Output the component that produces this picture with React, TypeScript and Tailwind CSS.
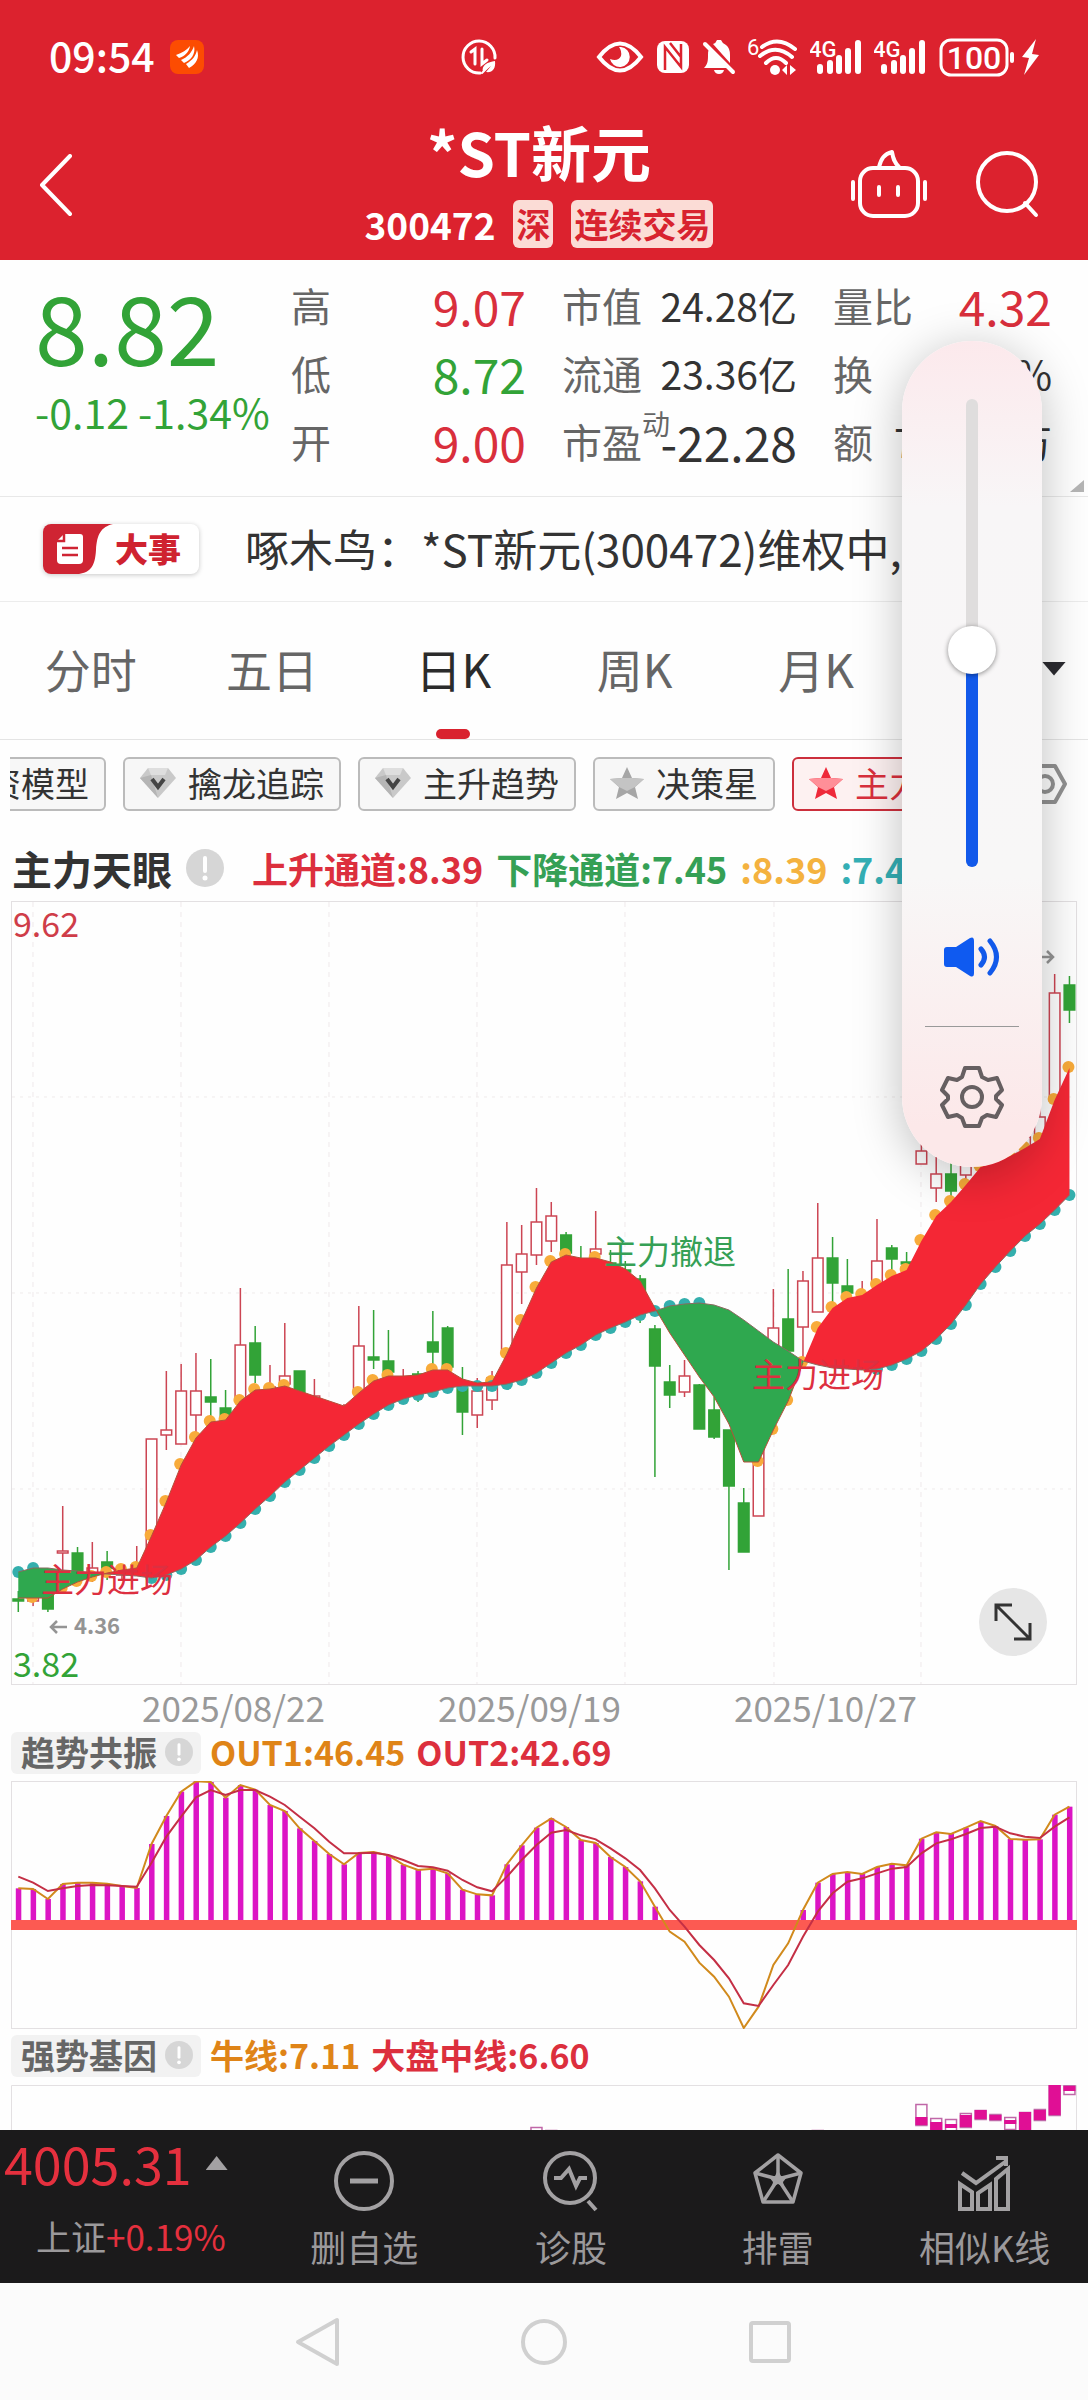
import React, { useState } from 'react';
import { X } from 'lucide-react';

type Candle = [kind: 'r' | 'g', index: number, high: number, top: number, bottom: number, low: number];

const STEP = 14.805;
const xAt = (i: number) => 7.3 + i * STEP;

const candles: Candle[] = [
  ['g', 0, 690, 698, 700, 711], ['r', 1, 690, 695, 700, 705], ['g', 2, 690, 693, 708, 711],
  ['r', 3, 605, 650, 652, 669], ['g', 4, 646, 652, 670, 671], ['r', 5, 641, 667, 672, 681],
  ['g', 6, 650, 661, 667, 679], ['r', 7, 669, 671, 674, 678], ['r', 8, 645, 664, 668, 675],
  ['r', 9, 538, 538, 666, 666], ['r', 10, 470, 529, 534, 549], ['r', 11, 463, 490, 543, 543],
  ['r', 12, 452, 490, 514, 531], ['g', 13, 458, 496, 501, 516], ['g', 14, 489, 507, 516, 516],
  ['r', 15, 387, 444, 497, 497], ['g', 16, 425, 442, 474, 482], ['r', 17, 464, 486, 490, 490],
  ['r', 18, 422, 475, 483, 483], ['g', 19, 470, 470, 492, 492], ['r', 20, 478, 495, 498, 498],
  ['r', 22, 503, 506, 508, 508], ['r', 23, 405, 445, 490, 490], ['g', 24, 409, 456, 459, 468],
  ['g', 25, 429, 460, 471, 471], ['r', 26, 468, 478, 480, 480], ['g', 27, 470, 473, 475, 501],
  ['g', 28, 410, 441, 451, 465], ['g', 29, 425, 427, 466, 466], ['g', 30, 466, 487, 511, 534],
  ['r', 31, 477, 490, 514, 527], ['r', 32, 470, 477, 499, 509], ['r', 33, 321, 364, 452, 452],
  ['r', 34, 324, 353, 371, 403], ['r', 35, 287, 321, 354, 364], ['r', 36, 301, 315, 340, 351],
  ['g', 37, 331, 334, 352, 352], ['g', 38, 345, 360, 362, 362], ['r', 39, 310, 348, 353, 353],
  ['g', 40, 349, 362, 364, 364], ['g', 41, 360, 369, 371, 371], ['g', 42, 374, 378, 397, 422],
  ['g', 43, 424, 428, 465, 576], ['g', 44, 464, 481, 494, 507], ['r', 45, 459, 475, 491, 496],
  ['g', 46, 483, 484, 528, 528], ['g', 47, 496, 509, 536, 538], ['g', 48, 529, 529, 585, 669],
  ['g', 49, 587, 602, 651, 651], ['r', 50, 540, 542, 615, 615], ['r', 51, 388, 427, 449, 449],
  ['g', 52, 368, 418, 450, 450], ['r', 53, 370, 380, 426, 459], ['r', 54, 302, 357, 411, 411],
  ['g', 55, 336, 357, 382, 404], ['g', 56, 358, 385, 392, 392], ['r', 57, 380, 394, 396, 396],
  ['r', 58, 318, 360, 382, 382], ['g', 59, 344, 347, 358, 375], ['g', 60, 351, 361, 363, 368],
  ['r', 61, 243, 250, 263, 263], ['r', 62, 256, 273, 287, 301], ['g', 63, 262, 273, 290, 302],
  ['r', 64, 240, 256, 274, 280], ['r', 68, 225, 236, 246, 246], ['r', 69, 205, 216, 238, 238],
  ['r', 70, 73, 92, 200, 200], ['g', 71, 75, 84, 109, 122],
];

const fast = [
  697, 697, 697, 688, 681, 676, 672, 669, 667, 635, 601, 564, 537, 521, 519, 500, 489, 488, 485, 490, 495, 500,
  505, 492, 480, 475, 475, 474, 469, 469, 478, 482, 481, 453, 420, 387, 361, 354, 357, 357, 361, 368, 380, 407,
  432, 454, 476, 496, 523, 561, 561, 529, 500, 462, 427, 407, 397, 394, 384, 375, 369, 340, 315, 301, 284, 266,
  261, 255, 247, 238, 199, 167,
];

const slow = [
  671, 667, 667, 669, 670, 672, 673, 674, 675, 677, 674, 668, 659, 646, 635, 622, 608, 595, 581, 569, 557, 545,
  534, 523, 513, 504, 498, 494, 491, 487, 485, 485, 485, 483, 479, 472, 462, 452, 444, 434, 427, 421, 414, 410,
  405, 403, 402, 404, 409, 419, 430, 441, 450, 460, 464, 467, 468, 469, 468, 464, 458, 450, 438, 423, 404, 383,
  366, 350, 335, 323, 309, 294,
];

const fastDots = [
  1, 3, 4, 5, 6, 7, 8, 9, 10, 11, 12, 13, 14, 15, 16, 17, 18, 23, 24, 25, 28, 29, 32, 33, 34, 35, 36, 37, 39, 50,
  51, 52, 53, 54, 55, 56, 57, 58, 59, 60, 61, 62, 63, 64, 65, 66, 67, 68, 69, 70, 71,
];
const slowDotHidden = [2, 3, 4, 5, 6, 7, 8, 47, 48, 49, 50, 51, 52, 53, 54, 55, 56, 57];

const out1 = [
  625, 627, 657, 612, 608, 608, 611, 618, 624, 492, 408, 335, 304, 306, 353, 315, 329, 375, 393, 445, 483, 522,
  553, 519, 516, 526, 554, 570, 566, 580, 629, 643, 646, 553, 496, 443, 415, 441, 480, 489, 531, 561, 604, 680,
  755, 785, 848, 890, 950, 1044, 980, 855, 790, 690, 608, 582, 576, 582, 561, 551, 556, 476, 457, 462, 443, 423,
  438, 477, 479, 478, 404, 380,
];
const out2 = [
  590, 608, 633, 625, 618, 615, 616, 618, 620, 548, 470, 410, 352, 330, 345, 330, 330, 350, 375, 410, 445, 485,
  520, 520, 518, 525, 540, 558, 562, 572, 600, 622, 634, 590, 540, 495, 458, 450, 466, 478, 505, 535, 570, 625,
  690, 740, 795, 840, 895, 970, 978, 915, 855, 770, 695, 640, 605, 595, 580, 566, 561, 520, 490, 478, 462, 444,
  440, 460, 470, 474, 440, 412,
];
const trendY = (v: number) => v / 3 - 101;

// split the channel wherever the two lines cross
function buildBands() {
  const bands: { up: boolean; points: string }[] = [];
  let top: number[][] = [[xAt(0), fast[0]]];
  let bottom: number[][] = [[xAt(0), slow[0]]];
  const close = (up: boolean) => {
    bands.push({ up, points: [...top, ...bottom.reverse()].map((p) => p.join(',')).join(' ') });
  };
  for (let i = 1; i < fast.length; i++) {
    const before = fast[i - 1] - slow[i - 1];
    const after = fast[i] - slow[i];
    if (before * after < 0) {
      const t = before / (before - after);
      const cross = [xAt(i - 1 + t), fast[i - 1] + (fast[i] - fast[i - 1]) * t];
      top.push(cross);
      bottom.push([...cross]);
      close(before < 0);
      top = [cross];
      bottom = [[...cross]];
    }
    top.push([xAt(i), fast[i]]);
    bottom.push([xAt(i), slow[i]]);
  }
  close(fast[fast.length - 1] < slow[slow.length - 1]);
  return bands;
}

const line = (values: number[], toY: (v: number) => number = (v) => v) =>
  values.map((v, i) => `${xAt(i)},${toY(v)}`).join(' ');

function Signal() {
  return (
    <svg width="52" height="38" viewBox="0 0 52 38" fill="#fff" aria-hidden="true">
      <text x="-1" y="19" fontSize="22" fontWeight="500" fontFamily="Roboto, sans-serif">4G</text>
      <rect x="7" y="26" width="6" height="10" rx="3" />
      <rect x="17" y="22" width="6" height="14" rx="3" />
      <rect x="26" y="17" width="6" height="19" rx="3" />
      <rect x="35" y="10" width="6" height="26" rx="3" />
      <rect x="45" y="2" width="6" height="34" rx="3" />
    </svg>
  );
}

function StatusBar() {
  return (
    <div className="flex h-[114px] items-center pr-[48px] pl-[49px] text-white">
      <span className="pb-1.5 text-[41px] leading-none font-medium">09:54</span>
      <svg className="ml-[15px] rounded-lg" width="34" height="34" viewBox="0 0 34 34" aria-hidden="true">
        <rect width="34" height="34" fill="#fc4c02" />
        <path d="M6 15C12 13 17 10 20 6C19 12 15 16 9 18Z" fill="#fff" />
        <path d="M11 20C18 17 22 12 24 6C26 14 21 20 14 23Z" fill="#fff" />
        <path d="M16 24C23 20 26 15 27 10C30 18 26 24 19 28Z" fill="#fff" />
      </svg>
      <svg className="ml-[257px]" width="37" height="38" viewBox="0 0 37 38" fill="none" stroke="#fff" strokeWidth="3" strokeLinecap="round" aria-hidden="true">
        <path d="M19 35A16 16 0 1 1 34 20" />
        <path d="M10 14L14 11V26M21 11V26L26 22" />
        <path d="M22 34C20 27 27 24 34 23C35 31 31 35 25 34L30 28" fill="#fff" stroke="none" />
        <path d="M21 35L28 28" strokeWidth="2" />
      </svg>
      <div className="ml-auto flex items-center gap-3">
        <svg width="48" height="34" viewBox="0 0 48 34" aria-hidden="true">
          <path d="M3 17Q24 -10 45 17Q24 44 3 17Z" fill="none" stroke="#fff" strokeWidth="4" />
          <path d="M25 7A10 10 0 1 1 14 19Q22 22 25 16Q26 11 23 7Z" fill="#fff" />
        </svg>
        <svg width="34" height="34" viewBox="0 0 34 34" aria-hidden="true">
          <rect x="1" y="1" width="32" height="32" rx="8" fill="#fff" />
          <path d="M9 30V7L25 27V4M9 7V27M14 3L25 17" fill="none" stroke="#dc222e" strokeWidth="2.5" />
        </svg>
        <svg width="34" height="36" viewBox="0 0 34 36" fill="#fff" aria-hidden="true">
          <path d="M7 10L27 29H2C6 25 6 21 6 16Q6 12 7 10Z" />
          <path d="M11 5Q14 4 15 1H19Q20 4 24 6Q28 9 28 16V24Z" />
          <path d="M12 31H22Q21 35 17 35T12 31Z" />
          <path d="M3 5L31 33" stroke="#fff" strokeWidth="4" strokeLinecap="round" />
        </svg>
        <svg width="50" height="38" viewBox="0 0 50 38" fill="none" stroke="#fff" aria-hidden="true">
          <text x="-1" y="17" fontSize="22" fontFamily="Roboto, sans-serif" fill="#fff" stroke="none">6</text>
          <path d="M14 9Q30 -3 47 11M12 18Q28 5 44 19M18 25Q28 15 38 25" strokeWidth="4" strokeLinecap="round" />
          <circle cx="27" cy="32" r="5" fill="#fff" stroke="none" />
          <path d="M34 32L39 27V37ZM48 32L42 27V37Z" fill="#fff" stroke="none" />
        </svg>
        <Signal />
        <Signal />
        <svg width="102" height="40" viewBox="0 0 102 40" aria-hidden="true">
          <rect x="3" y="3" width="66" height="35" rx="10" fill="none" stroke="#fff" strokeWidth="3" />
          <text x="36" y="32" textAnchor="middle" fontSize="32" fontWeight="500" fontFamily="Roboto, sans-serif" fill="#fff">100</text>
          <rect x="72" y="15" width="4" height="11" rx="2" fill="#fff" />
          <path d="M98 2L84 20L91 21L86 38L101 18L94 17Z" fill="#fff" />
        </svg>
      </div>
    </div>
  );
}

function Header() {
  return (
    <header className="bg-[#dc222e]">
      <StatusBar />
      <div className="grid h-[146px] grid-cols-[1fr_auto_1fr] items-center pr-[46px] pl-9">
        <button type="button" aria-label="返回" className="justify-self-start">
          <svg width="40" height="66" viewBox="0 0 40 66" fill="none" stroke="#fff" strokeWidth="4" strokeLinecap="round" strokeLinejoin="round">
            <path d="M34 2L6 31L34 60" />
          </svg>
        </button>
        <div className="flex flex-col items-center text-white">
          <h1 className="mb-6 text-[60px] leading-[50px] font-bold">*ST新元</h1>
          <p className="flex items-center gap-[18px] text-[34px] leading-[48px] font-bold">
            <span className="text-[37px]">300472</span>
            <span className="rounded-md bg-[#fbdcd6] px-[3px] text-[#d8232f]">深</span>
            <span className="rounded-md bg-[#fbdcd6] px-[3px] text-[#d8232f]">连续交易</span>
          </p>
        </div>
        <div className="flex items-center gap-[46px] justify-self-end pb-1.5">
          <button type="button" aria-label="智能助手">
            <svg width="78" height="70" viewBox="0 0 78 70" fill="none" stroke="#fff" strokeWidth="4" strokeLinecap="round" strokeLinejoin="round">
              <rect x="10" y="19" width="58" height="48" rx="13" />
              <path d="M29 18C31 10 34 5 42 3C43 9 44 13 49 18M3 33V50M75 33V50" />
              <path d="M29 38V46M48 38V46" />
            </svg>
          </button>
          <button type="button" aria-label="搜索">
            <svg width="68" height="70" viewBox="0 0 68 70" fill="none" stroke="#fff" strokeWidth="4" strokeLinecap="round">
              <circle cx="33" cy="33" r="29" />
              <path d="M51 54L62 66" />
            </svg>
          </button>
        </div>
      </div>
    </header>
  );
}

function Quote() {
  return (
    <section className="relative grid h-[237px] grid-cols-[220px_235px_235px_219px] content-start gap-x-[36px] border-b border-[#e8e8e8] pt-[11px] pl-[35px]">
      <div className="text-[#32a337]">
        <div className="text-[95px] leading-[108px]">8.82</div>
        <div className="mt-1.5 text-[41px] leading-[52px] whitespace-nowrap">-0.12 -1.34%</div>
      </div>
      <dl className="grid grid-cols-[auto_1fr] text-[40px] leading-[68px] text-[#666]">
        <dt>高</dt>
        <dd className="text-right text-[48px] text-[#d92f3c]">9.07</dd>
        <dt>低</dt>
        <dd className="text-right text-[48px] text-[#32a337]">8.72</dd>
        <dt>开</dt>
        <dd className="text-right text-[48px] text-[#d92f3c]">9.00</dd>
      </dl>
      <dl className="grid grid-cols-[auto_1fr] text-[40px] leading-[68px] whitespace-nowrap text-[#666]">
        <dt>市值</dt>
        <dd className="text-right text-[39px] text-[#333]">24.28亿</dd>
        <dt>流通</dt>
        <dd className="text-right text-[39px] text-[#333]">23.36亿</dd>
        <dt className="relative">
          市盈<span className="absolute top-0 left-full -mt-[18px] text-[28px]">动</span>
        </dt>
        <dd className="text-right text-[48px] text-[#333]">-22.28</dd>
      </dl>
      <dl className="grid grid-cols-[auto_1fr] text-[40px] leading-[68px] whitespace-nowrap text-[#666]">
        <dt>量比</dt>
        <dd className="text-right text-[48px] text-[#d92f3c]">4.32</dd>
        <dt>换</dt>
        <dd className="text-right text-[#333]">3.28%</dd>
        <dt>额</dt>
        <dd className="-ml-10 text-right text-[39px] text-[#333]">7358.4万</dd>
      </dl>
      <span className="absolute right-1 bottom-1 h-3 w-3.5 bg-[#b5b5b5] [clip-path:polygon(100%_0,100%_100%,0_100%)]" />
    </section>
  );
}

function News() {
  return (
    <section className="flex h-[105px] items-center border-b border-[#ececec] pr-[40px] pl-[43px] whitespace-nowrap">
      <span className="flex h-[50px] items-center overflow-hidden rounded-lg bg-white pr-[18px] text-[33px] font-black text-[#cf2230] shadow-[0_1px_5px_rgba(0,0,0,0.22)]">
        <svg width="72" height="50" viewBox="0 0 72 50" aria-hidden="true">
          <path d="M0 0H70C58 3 54 10 53 26C52 42 48 48 36 50H0Z" fill="#cf2433" />
          <path d="M21 10H37Q40 10 40 13V36Q40 40 36 40H18Q14 40 14 36V17Z" fill="#fff" />
          <path d="M21 10V17H14M19 24H35M19 31H35" fill="none" stroke="#cf2433" strokeWidth="2.5" />
        </svg>
        大事
      </span>
      <a href="#news" className="ml-[46px] pb-0.5 text-[44px] leading-none text-[#333]">啄木鸟：*ST新元(300472)维权中,</a>
      <button type="button" aria-label="关闭" className="ml-auto text-[#999]">
        <X size={42} strokeWidth={2} />
      </button>
    </section>
  );
}

function Tabs() {
  const tabs = ['分时', '五日', '日K', '周K', '月K'];
  const [active, setActive] = useState('日K');
  return (
    <nav className="grid h-[138px] grid-cols-6 border-b border-[#e4e4e4] text-[46px] text-[#666]">
      {tabs.map((tab) => (
        <button
          key={tab}
          type="button"
          onClick={() => setActive(tab)}
          className={`relative pb-1 ${active === tab ? 'text-[#2b2b2b]' : ''}`}
        >
          {tab}
          {active === tab && <span className="absolute bottom-0 left-1/2 h-2.5 w-[34px] -translate-x-1/2 rounded-md bg-[#d9222e]" />}
        </button>
      ))}
      <button type="button" className="flex items-center justify-end gap-2 pr-[22px] pb-1">
        分钟
        <span className="h-3.5 w-6 bg-[#2b2b30] [clip-path:polygon(0_0,100%_0,50%_100%)]" />
      </button>
    </nav>
  );
}

function Gem() {
  return (
    <svg width="36" height="32" viewBox="0 0 36 32" aria-hidden="true">
      <path d="M8 1H28L36 11L18 31L0 11Z" fill="#c9c9c9" />
      <path d="M8 1H28L25 8H11Z" fill="#dedede" />
      <path d="M0 11L11 8L18 31Z" fill="#b5b5b5" />
      <path d="M12 12L18 20L24 12" fill="none" stroke="#444" strokeWidth="4" />
    </svg>
  );
}

function Star({ outer, inner }: { outer: string; inner: string }) {
  return (
    <svg width="34" height="32" viewBox="0 0 34 32" aria-hidden="true">
      <path d="M17 0L22 11L34 12L25 20L28 32L17 26L6 32L9 20L0 12L12 11Z" fill={outer} />
      <path d="M34 12L25 20L17 24L9 20L0 12L12 11H22Z" fill={inner} />
    </svg>
  );
}

function Chips() {
  const base = 'flex h-[54px] shrink-0 items-center gap-3 rounded-md border-2 px-[15px] pb-0.5';
  return (
    <div className="flex items-center pt-[17px] pr-[21px] pl-2.5 text-[34px] leading-none whitespace-nowrap text-[#333]">
      <div className="flex flex-1 gap-[17px] overflow-hidden">
        <button type="button" className={`${base} -ml-[74px] border-[#bbb] bg-[#f7f7f7]`}>投资模型</button>
        <button type="button" className={`${base} border-[#bbb] bg-[#f7f7f7]`}><Gem />擒龙追踪</button>
        <button type="button" className={`${base} border-[#bbb] bg-[#f7f7f7]`}><Gem />主升趋势</button>
        <button type="button" className={`${base} border-[#bbb] bg-[#f7f7f7]`}><Star outer="#a6a6a6" inner="#c4c4c4" />决策星</button>
        <button type="button" className={`${base} border-[#cc2f3c] bg-[#fdf1f1] text-[#d92f3c]`}><Star outer="#ee2a3a" inner="#ff8f98" />主力天眼</button>
      </div>
      <button type="button" aria-label="指标设置" className="ml-3">
        <svg width="44" height="40" viewBox="0 0 44 40" fill="none" stroke="#919191" strokeWidth="4" strokeLinejoin="round">
          <path d="M12 2H32L42 20L32 38H12L2 20Z" />
          <circle cx="22" cy="20" r="8" />
        </svg>
      </button>
    </div>
  );
}

function Info({ size }: { size: number }) {
  return (
    <svg width={size} height={size} viewBox="0 0 38 38" aria-hidden="true">
      <circle cx="19" cy="19" r="19" fill="#d6d6d6" />
      <path d="M19 9V22" stroke="#fff" strokeWidth="4" strokeLinecap="round" />
      <circle cx="19" cy="29" r="2.5" fill="#fff" />
    </svg>
  );
}

function PriceChart() {
  const bands = buildBands();
  return (
    <div className="relative mx-[11px]">
      <svg className="block h-auto w-full" viewBox="0 0 1066 784" role="img" aria-label="日K线">
        <rect x="0.5" y="0.5" width="1065" height="783" fill="none" stroke="#e3e0e2" />
        {[22, 170, 318, 466, 614, 763, 910].map((x) => (
          <path key={x} d={`M${x} 1V783`} stroke="#efe9eb" strokeDasharray="5 5" />
        ))}
        {[196, 392, 588].map((y) => (
          <path key={y} d={`M1 ${y}H1065`} stroke="#efebeb" strokeDasharray="3 5" />
        ))}
        {candles.map(([kind, i, high, top, bottom, low]) => (
          <g key={i} stroke={kind === 'r' ? '#cc4553' : '#32a337'} strokeWidth="1.5">
            <path d={`M${xAt(i)} ${high}V${top}M${xAt(i)} ${bottom}V${low}`} />
            <rect x={xAt(i) - 5.3} y={top} width="10.6" height={bottom - top} fill={kind === 'r' ? '#fff' : '#32a337'} />
          </g>
        ))}
        {fastDots.map((i) => (
          <circle key={i} cx={xAt(i) - 1} cy={fast[i] - 1} r="6" fill="#f8ab3a" />
        ))}
        {slow.map((y, i) =>
          slowDotHidden.includes(i) ? null : <circle key={i} cx={xAt(i)} cy={y} r="6" fill="#34afad" />
        )}
        {bands.map((band) => (
          <polygon key={band.points} points={band.points} fill={band.up ? '#f42735' : '#2fa84f'} />
        ))}
        <polyline points={line(slow)} fill="none" stroke="#8a6a60" strokeWidth="1" />
        <polyline points={line(fast.slice(0, 54))} fill="none" stroke="#b5503a" strokeWidth="1" />
        <g fontSize="33">
          <text x="2" y="36" fill="#cf3d49" fontSize="34">9.62</text>
          <text x="30" y="691" fill="#dd2f40">主力进场</text>
          <text x="593" y="363" fill="#35a055">主力撤退</text>
          <text x="741" y="486" fill="#dd2f40">主力进场</text>
          <text x="2" y="776" fill="#32a337" fontSize="34">3.82</text>
          <text x="63" y="733" fill="#949494" fontSize="22" fontWeight="700">4.36</text>
        </g>
        <path d="M56 726H40M46 720L40 726L46 732M1018 56H1042M1036 50L1042 56L1036 62" fill="none" stroke="#949494" strokeWidth="2.5" />
      </svg>
      <button type="button" aria-label="全屏" className="absolute right-[30px] bottom-[29px] rounded-full bg-[#e6e6e6] p-[15px]">
        <svg width="38" height="38" viewBox="0 0 38 38" fill="none" stroke="#333" strokeWidth="3">
          <path d="M2 18V2H18M2 2L36 36M36 20V36H20" />
        </svg>
      </button>
    </div>
  );
}

function SubTitle({ name, children }: { name: string; children: React.ReactNode }) {
  return (
    <div className="flex items-center gap-[9px] pl-[11px] text-[34px] leading-[40px] font-bold">
      <button type="button" className="flex items-center gap-2 rounded-md bg-[#f2f2f2] pr-2 pb-0.5 pl-2.5 text-[#666]">
        {name}
        <Info size={28} />
      </button>
      <p className="flex gap-[11px] pb-0.5">{children}</p>
    </div>
  );
}

function TrendChart() {
  return (
    <svg className="mt-[7px] block h-auto w-full px-[11px]" viewBox="0 0 1066 248" role="img" aria-label="趋势共振">
      <rect x="0.5" y="0.5" width="1065" height="247" fill="none" stroke="#e3e0e2" />
      {out1.map((v, i) =>
        v < 721 ? <rect key={i} x={xAt(i) - 2.5} y={trendY(v)} width="5.5" height={140 - trendY(v)} fill="#dc14c4" /> : null
      )}
      <rect y="139" width="1066" height="10" fill="#fc5a52" />
      <polyline points={line(out1, trendY)} fill="none" stroke="#d18a1c" strokeWidth="2" />
      <polyline points={line(out2, trendY)} fill="none" stroke="#c42f45" strokeWidth="2" />
    </svg>
  );
}

// index, outline top, outline bottom, fill top, fill bottom
const geneBars = [
  [35, 42, 60, 60, 60], [36, 45, 60, 60, 60], [54, 45, 60, 60, 60],
  [61, 19, 40, 32, 40], [62, 33, 60, 37, 60], [63, 34, 60, 39, 43], [64, 28, 42, 30, 42],
  [65, 25, 34, 25, 34], [66, 29, 35, 30, 35], [67, 32, 44, 35, 39], [68, 27, 60, 27, 60],
  [69, 24, 35, 25, 35], [70, 0, 30, 0, 30], [71, 0, 9, 1, 6],
];

function GeneChart() {
  return (
    <svg className="mt-2 block h-auto w-full px-[11px]" viewBox="0 0 1066 45" role="img" aria-label="强势基因">
      <path d="M0.5 45V0.5H1065.5V45" fill="none" stroke="#e3e0e2" />
      {geneBars.map(([i, top, bottom, fillTop, fillBottom]) => (
        <g key={i}>
          <rect x={xAt(i) - 5.5} y={top + 0.5} width="11" height={bottom - top} fill="#fff" stroke="#c067a8" strokeWidth="1.5" />
          <rect x={xAt(i) - 6} y={fillTop} width="12" height={fillBottom - fillTop} fill="#e00f95" />
        </g>
      ))}
    </svg>
  );
}

function BottomBar() {
  const item = 'flex flex-1 flex-col items-center gap-2 pt-5 text-[36px] leading-[52px]';
  return (
    <footer className="flex h-[153px] bg-[#1b1a1b] whitespace-nowrap text-[#9b999b]">
      <div className="flex w-[261px] shrink-0 flex-col pt-1">
        <div className="flex items-center gap-3.5 pl-1 text-[52px] leading-[58px] text-[#e5303e]">
          4005.31
          <span className="h-3.5 w-[22px] bg-[#a3a1a3] [clip-path:polygon(50%_0,100%_100%,0_100%)]" />
        </div>
        <div className="pt-[18px] pl-9 text-[35px] leading-[52px]">
          上证<span className="text-[#e5303e]">+0.19%</span>
        </div>
      </div>
      <button type="button" className={item}>
        <svg width="62" height="62" viewBox="0 0 62 62" fill="none" stroke="#a3a1a3" strokeWidth="4">
          <circle cx="31" cy="31" r="28" />
          <path d="M17 31H45" strokeWidth="5" />
        </svg>
        删自选
      </button>
      <button type="button" className={item}>
        <svg width="62" height="62" viewBox="0 0 62 62" fill="none" stroke="#a3a1a3" strokeWidth="4">
          <circle cx="30" cy="28" r="25" />
          <path d="M14 28H21L29 19L36 36L40 28H47M48 51L56 60" />
        </svg>
        诊股
      </button>
      <button type="button" className={item}>
        <svg width="62" height="62" viewBox="0 0 62 62" fill="none" stroke="#a3a1a3" strokeWidth="3.5" strokeLinejoin="round">
          <path d="M31 5L54 23L46 52H16L8 23Z" />
          <path d="M31 5V29L54 23M31 29L46 52M31 29L16 52M31 29L8 23" />
          <path d="M31 20L34 26L40 27L36 32L37 37L31 34L25 37L26 32L22 27L28 26Z" fill="#a3a1a3" stroke="none" />
        </svg>
        排雷
      </button>
      <button type="button" className={item}>
        <svg width="62" height="62" viewBox="0 0 62 62" fill="none" stroke="#a3a1a3" strokeWidth="4">
          <path d="M6 59V34L18 42V59ZM24 59V43L36 35V59ZM42 59V29L54 19V59Z" />
          <path d="M8 23L22 33L51 12M42 8H52V16" />
        </svg>
        相似K线
      </button>
    </footer>
  );
}

function SystemNav() {
  return (
    <nav className="flex h-[117px] items-center justify-center gap-[177px] bg-[#fbfbfb]">
      <button type="button" aria-label="后退">
        <svg width="48" height="50" viewBox="0 0 48 50" fill="none" stroke="#d0d0d0" strokeWidth="4" strokeLinejoin="round"><path d="M43 3V47L4 25Z" /></svg>
      </button>
      <button type="button" aria-label="主屏幕">
        <svg width="50" height="50" viewBox="0 0 50 50" fill="none" stroke="#d0d0d0" strokeWidth="4"><circle cx="25" cy="25" r="21" /></svg>
      </button>
      <button type="button" aria-label="最近任务">
        <svg width="48" height="50" viewBox="0 0 48 50" fill="none" stroke="#d0d0d0" strokeWidth="4"><rect x="5" y="6" width="38" height="38" rx="2" /></svg>
      </button>
    </nav>
  );
}

function VolumePanel() {
  const [volume, setVolume] = useState(46);
  return (
    <aside className="absolute top-[341px] right-[46px] flex w-[140px] flex-col items-center rounded-[70px] bg-[linear-gradient(to_bottom,#fce9ec_0%,#f8f6f7_20%,#f8f7f7_65%,#fce8e9_95%)] pt-[58px] pb-[38px] shadow-[0_8px_48px_rgba(0,0,0,0.25)]">
      <div className="grid h-[468px] justify-items-center">
        <div className="flex w-3 flex-col justify-end overflow-hidden rounded-full bg-[#dfdddd] [grid-area:1/1]">
          <div className="bg-[#1259ea]" style={{ height: `${volume}%` }} />
        </div>
        <input
          type="range"
          aria-label="音量"
          min={0}
          max={100}
          value={volume}
          onChange={(e) => setVolume(Number(e.target.value))}
          className="h-[468px] w-12 appearance-none bg-transparent [direction:rtl] [grid-area:1/1] [writing-mode:vertical-lr] [&::-webkit-slider-thumb]:h-12 [&::-webkit-slider-thumb]:w-12 [&::-webkit-slider-thumb]:appearance-none [&::-webkit-slider-thumb]:rounded-full [&::-webkit-slider-thumb]:bg-white [&::-webkit-slider-thumb]:shadow-[0_1px_5px_rgba(0,0,0,0.45)]"
        />
      </div>
      <button type="button" aria-label="静音" className="mt-[69px]">
        <svg width="58" height="42" viewBox="0 0 58 42" aria-hidden="true">
          <path d="M4 11H13L27 2Q31 0 31 5V37Q31 42 27 40L13 31H4Q1 31 1 28V14Q1 11 4 11Z" fill="#0f5af0" />
          <path d="M38 13Q45 21 38 29M47 5Q60 21 47 37" fill="none" stroke="#1259ea" strokeWidth="5" strokeLinecap="round" />
        </svg>
      </button>
      <hr className="mt-12 w-[94px] border-[#999]" />
      <button type="button" aria-label="声音设置" className="mt-[38px]">
        <svg width="64" height="64" viewBox="0 0 64 64" fill="none" stroke="#665f61" strokeWidth="4" strokeLinejoin="round">
          <path d="M25 3H39L42 12L48 15L57 13L62 25L56 31V34L62 40L56 52L47 50L42 53L39 61H25L22 53L17 50L8 52L2 40L8 34V31L2 25L8 13L17 15L22 12Z" />
          <circle cx="32" cy="32" r="10" />
        </svg>
      </button>
    </aside>
  );
}

export default function App() {
  return (
    <div className="relative w-full overflow-hidden bg-[#fefefe] font-['Noto_Sans_CJK_SC','Noto_Sans',sans-serif]">
      <Header />
      <Quote />
      <News />
      <Tabs />
      <Chips />
      <section>
        <div className="flex h-[90px] items-center pt-6 pl-3 text-[36px] leading-none font-bold whitespace-nowrap">
          <h2 className="text-[40px] text-[#333]">主力天眼</h2>
          <span className="mr-7 ml-3.5"><Info size={38} /></span>
          <p className="flex gap-[13px]">
            <span className="text-[#dc2f3d]">上升通道:8.39</span>
            <span className="text-[#35a055]">下降通道:7.45</span>
            <span className="text-[#f4b23f]">:8.39</span>
            <span className="text-[#34afb5]">:7.45</span>
          </p>
        </div>
        <PriceChart />
        <div className="flex pb-1 pl-[142px] text-[35px] leading-[43px] text-[#999]">
          <time className="w-[296px]">2025/08/22</time>
          <time className="w-[296px]">2025/09/19</time>
          <time className="w-[296px]">2025/10/27</time>
        </div>
      </section>
      <section>
        <SubTitle name="趋势共振">
          <span className="text-[#df8417]">OUT1:46.45</span>
          <span className="text-[#dc2f3d]">OUT2:42.69</span>
        </SubTitle>
        <TrendChart />
      </section>
      <section className="pt-[6px]">
        <SubTitle name="强势基因">
          <span className="text-[#df8417]">牛线:7.11</span>
          <span className="text-[#dc2f3d]">大盘中线:6.60</span>
        </SubTitle>
        <GeneChart />
      </section>
      <BottomBar />
      <SystemNav />
      <VolumePanel />
    </div>
  );
}
